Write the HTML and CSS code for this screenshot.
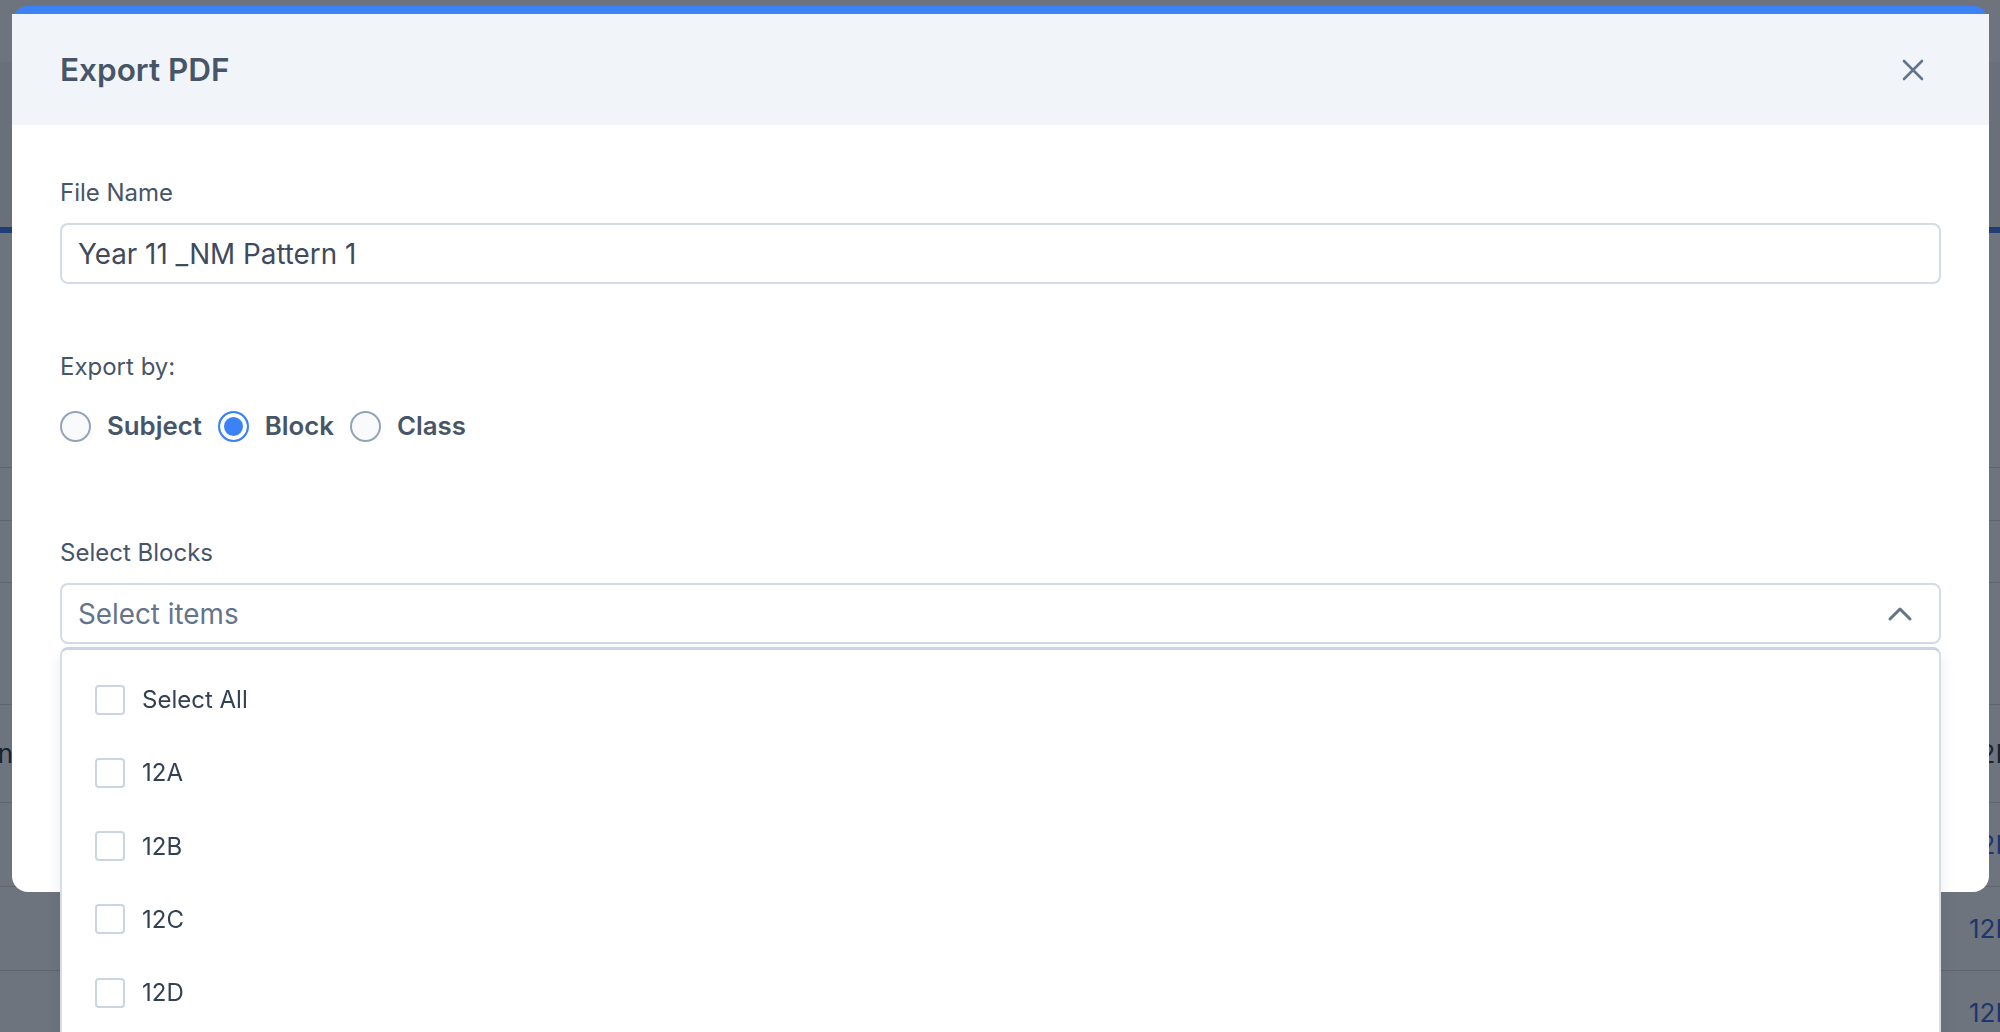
FILE: index.html
```html
<!DOCTYPE html>
<html lang="en">
<head>
    <meta charset="UTF-8">
    <meta name="viewport" content="width=device-width, initial-scale=1.0">
    <title>Export PDF</title>
    <link rel="stylesheet" href="styles.css">
</head>
<body>
    <!-- page behind the dialog -->
    <div class="page">
        <div class="topbar"></div>
        <div class="toolbar"></div>
        <div class="tab-line"></div>
        <div class="panel">
            <div class="row row-intro"></div>
            <div class="row row-a"></div>
            <div class="row row-b"></div>
            <div class="row row-c"></div>
            <div class="row row-head">
                <div class="cell-left"><span>Plan</span></div>
                <div class="cell-right dark">12D</div>
            </div>
            <div class="row">
                <div class="cell-left"></div>
                <div class="cell-right">12D</div>
            </div>
            <div class="row">
                <div class="cell-left"></div>
                <div class="cell-right">12D</div>
            </div>
            <div class="row">
                <div class="cell-left"></div>
                <div class="cell-right">12D</div>
            </div>
        </div>
    </div>

    <div class="backdrop"></div>

    <div class="modal">
        <div class="modal-header">
            <h2>Export PDF</h2>
            <button class="close-btn" aria-label="Close">
                <svg width="22" height="22" viewBox="0 0 22 22">
                    <path d="M2 2 L20 20 M20 2 L2 20" stroke="#64748b" stroke-width="2.6" stroke-linecap="round" fill="none"/>
                </svg>
            </button>
        </div>

        <div class="modal-body">
            <div class="field field-name">
                <label class="label" for="file_name">File Name</label>
                <input class="text-input" id="file_name" type="text" value="Year 11 _NM Pattern 1">
            </div>

            <div class="field field-export">
                <span class="label">Export by:</span>
                <div class="radios">
                    <label class="radio"><span class="radio-dot"></span>Subject</label>
                    <label class="radio"><span class="radio-dot checked"></span>Block</label>
                    <label class="radio"><span class="radio-dot"></span>Class</label>
                </div>
            </div>

            <div class="field field-blocks">
                <span class="label">Select Blocks</span>
                <div class="multi-select">
                    <div class="select-box">
                        <span class="placeholder">Select items</span>
                        <svg width="26" height="16" viewBox="0 0 26 16">
                            <polyline points="3,13 13,3 23,13" stroke="#64748b" stroke-width="3" stroke-linecap="round" stroke-linejoin="round" fill="none"/>
                        </svg>
                    </div>
                    <ul class="options">
                        <li><span class="check"></span>Select All</li>
                        <li><span class="check"></span>12A</li>
                        <li><span class="check"></span>12B</li>
                        <li><span class="check"></span>12C</li>
                        <li><span class="check"></span>12D</li>
                        <li><span class="check"></span>12E</li>
                    </ul>
                </div>
            </div>
        </div>
    </div>
</body>
</html>
```

FILE: styles.css
```css
/* Dasar */
* {
    box-sizing: border-box;
}

html, body {
    margin: 0;
    height: 100%;
    overflow: hidden;
}

body {
    font-family: Inter, "Noto Sans", sans-serif;
    background: #f3f4f6;
    color: #334155;
}

/* Halaman di belakang dialog */
.page {
    width: 2000px;
}

.topbar {
    height: 62px;
    background: #ffffff;
}

.toolbar {
    height: 165px;
    background: #f3f4f6;
}

.tab-line {
    height: 6px;
    background: #2563eb;
}

.panel {
    background: #ffffff;
}

.row {
    display: flex;
    justify-content: space-between;
    align-items: center;
    height: 84px;
    border-bottom: 1px solid #d1d5db;
    font-size: 26px;
}

.row-intro {
    height: 235px;
}

.row-a {
    height: 53px;
}

.row-b {
    height: 62px;
}

.row-c {
    height: 122px;
}

.row-head {
    height: 98px;
}

.cell-left {
    width: 13px;
    display: flex;
    justify-content: flex-end;
    white-space: nowrap;
    color: #111827;
}

.cell-right {
    width: 31px;
    white-space: nowrap;
    color: #1d4ed8;
}

.cell-right.dark {
    color: #111827;
}

/* Overlay */
.backdrop {
    position: fixed;
    inset: 0;
    background: rgba(31, 41, 55, 0.65);
}

.modal {
    position: fixed;
    top: 6px;
    left: 12px;
    width: 1977px;
    height: 886px;
    background: #ffffff;
    border-top: 8px solid #3b82f6;
    border-radius: 16px;
}

.modal-header {
    display: flex;
    align-items: center;
    justify-content: space-between;
    height: 111px;
    padding: 0 48px;
    background: #f1f5f9;
}

.modal-header h2 {
    margin: 0;
    font-size: 31.5px;
    font-weight: 600;
    color: #475569;
}

.close-btn {
    display: flex;
    align-items: center;
    justify-content: center;
    width: 56px;
    height: 56px;
    padding: 0;
    border: 0;
    background: none;
}

.modal-body {
    padding: 0 48px;
}

.label {
    display: block;
    font-size: 24px;
    line-height: 32px;
    color: #475569;
}

.field-name {
    margin-top: 52px;
}

.field-name .label,
.field-blocks .label {
    margin-bottom: 14px;
}

.text-input {
    display: block;
    width: 100%;
    height: 61px;
    padding: 0 16px;
    border: 2px solid #d3dbe6;
    border-radius: 8px;
    font-family: Inter, "Noto Sans", sans-serif;
    font-size: 27.8px;
    color: #3f4b5c;
    background: #ffffff;
}

.field-export {
    margin-top: 67px;
}

.field-export .label {
    margin-bottom: 27px;
}

.radios {
    display: flex;
    align-items: center;
    gap: 16px;
}

.radio {
    display: flex;
    align-items: center;
    gap: 16px;
    font-size: 25.8px;
    line-height: 32px;
    font-weight: 600;
    color: #475569;
}

.radio-dot {
    width: 31px;
    height: 31px;
    border: 2px solid #94a3b8;
    border-radius: 50%;
    background: #f8fafc;
}

.radio-dot.checked {
    border-color: #3b82f6;
    background: #3b82f6;
    box-shadow: inset 0 0 0 4px #ffffff;
}

.field-blocks {
    margin-top: 95px;
}

/* Multi select */
.multi-select {
    position: relative;
}

.select-box {
    display: flex;
    align-items: center;
    justify-content: space-between;
    height: 61px;
    padding: 0 26px 0 16px;
    border: 2px solid #d3dbe6;
    border-radius: 8px;
}

.placeholder {
    font-size: 27.8px;
    color: #64748b;
}

.options {
    position: absolute;
    top: calc(100% + 3px);
    left: 0;
    right: 0;
    margin: 0;
    padding: 13px 33px;
    list-style: none;
    background: #ffffff;
    border: 2px solid #d5dde7;
    border-top: 3px solid #cbd5e1;
    border-radius: 8px;
    box-shadow: 0 6px 16px rgba(15, 23, 42, 0.08);
}

.options li {
    display: flex;
    align-items: center;
    gap: 17px;
    height: 73.25px;
    font-size: 24px;
    color: #334155;
}

.check {
    width: 30px;
    height: 30px;
    border: 2px solid #cbd5e1;
    border-radius: 4px;
    background: #ffffff;
}
```
